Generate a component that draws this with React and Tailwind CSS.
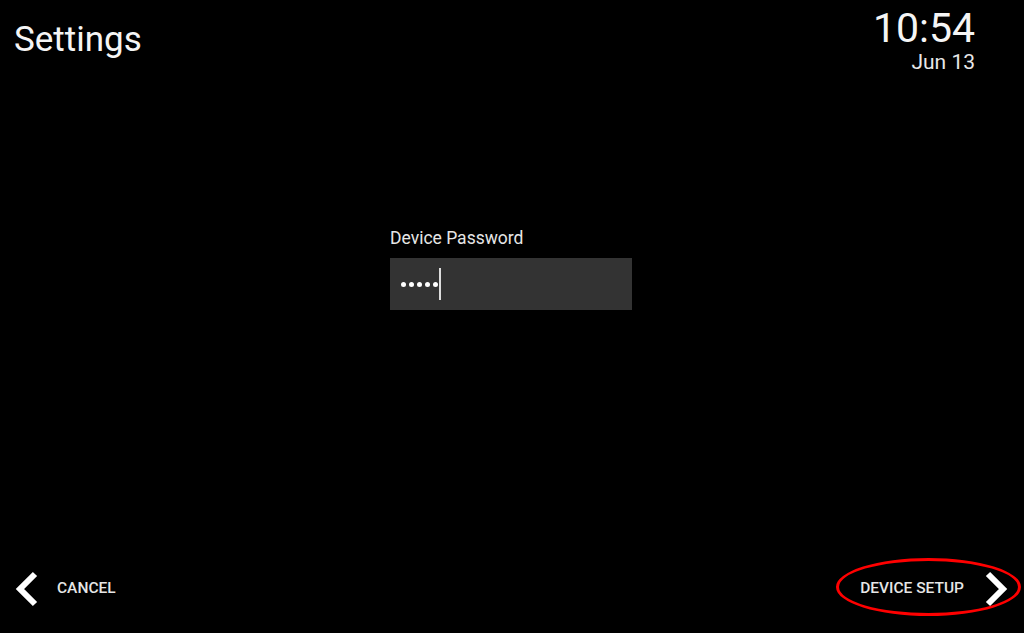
export default function App() {
  return (
    <div className="relative flex h-[633px] w-[1024px] flex-col overflow-hidden bg-black text-white font-['Roboto',sans-serif]">
      <div className="flex items-start justify-between">
        <div className="pl-[14px] pt-[19px] text-[35px] leading-[42px] text-[#f5f5f5]">Settings</div>
        <div className="flex flex-col items-end pr-[49px] pt-[5px]">
          <div className="text-[41px] leading-[46px] text-[#f5f5f5]">10:54</div>
          <div className="-mt-[1px] text-[21px] leading-[24px] text-[#e8e8e8]">Jun 13</div>
        </div>
      </div>

      <div className="flex flex-1 flex-col items-center pr-[2px] pt-[153px]">
        <div className="w-[242px]">
          <div className="text-[17.5px] leading-[22px] text-[#e6e6e6]">Device Password</div>
          <div className="mt-[9px] flex h-[52px] items-center bg-[#333333] pl-[11px]">
            <div className="flex items-center gap-[3px]">
              <span className="h-[5px] w-[5px] rounded-full bg-white" />
              <span className="h-[5px] w-[5px] rounded-full bg-white" />
              <span className="h-[5px] w-[5px] rounded-full bg-white" />
              <span className="h-[5px] w-[5px] rounded-full bg-white" />
              <span className="h-[5px] w-[5px] rounded-full bg-white" />
            </div>
            <span className="ml-[1px] h-[32px] w-[2px] bg-[#dddddd]" />
          </div>
        </div>
      </div>

      <div className="flex items-center justify-between pb-[26px]">
        <div className="flex items-center pl-[15px]">
          <svg width="24" height="36" viewBox="0 0 24 36">
            <path d="M20 3 L5 18 L20 33" fill="none" stroke="white" strokeWidth="6" strokeLinejoin="miter" />
          </svg>
          <span className="ml-[18px] text-[15.5px] font-medium text-[#e6e6e6]">CANCEL</span>
        </div>
        <div className="flex items-center pr-[16px]">
          <span className="text-[15.5px] font-medium text-[#e6e6e6]">DEVICE SETUP</span>
          <svg className="ml-[20px]" width="24" height="36" viewBox="0 0 24 36">
            <path d="M4 3 L19 18 L4 33" fill="none" stroke="white" strokeWidth="6" strokeLinejoin="miter" />
          </svg>
        </div>
      </div>

      <div className="pointer-events-none absolute left-[836px] top-[558px] h-[58px] w-[185px] rounded-[50%] border-[3px] border-[#ff0000]" />
    </div>
  );
}
